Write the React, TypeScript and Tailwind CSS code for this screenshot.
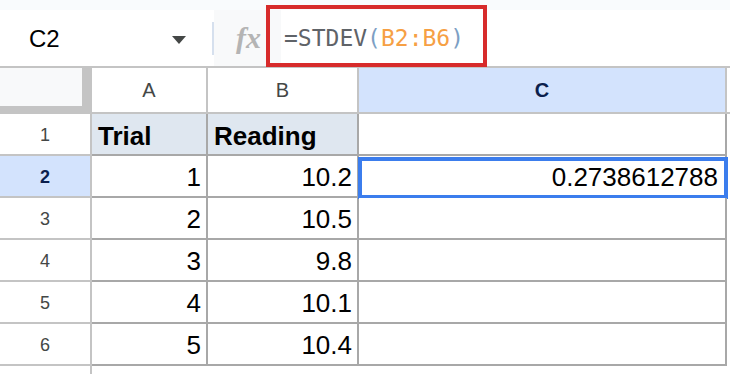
import React from "react";

const rows = [
  { n: 1, a: "Trial", b: "Reading", c: "", head: true },
  { n: 2, a: "1", b: "10.2", c: "0.2738612788" },
  { n: 3, a: "2", b: "10.5", c: "" },
  { n: 4, a: "3", b: "9.8", c: "" },
  { n: 5, a: "4", b: "10.1", c: "" },
  { n: 6, a: "5", b: "10.4", c: "" },
];

export default function App() {
  return (
    <div
      className="relative w-[730px] h-[374px] overflow-hidden bg-white"
      style={{ fontFamily: '"Liberation Sans", Arial, sans-serif' }}
    >
      {/* top strip */}
      <div className="h-[10px] bg-[#f9fbfd]" />
      {/* formula bar */}
      <div className="flex h-[58px] border-b-2 border-[#c4c4c4]">
        <div className="flex w-[212px] items-center justify-between bg-white pl-[29px] pr-[26px] pt-[1px]">
          <span className="text-[24px] leading-none text-black">C2</span>
          <svg width="14" height="8" viewBox="0 0 14 8" className="mt-[2px]">
            <path d="M0 0 L14 0 L7 8 Z" fill="#444746" />
          </svg>
        </div>
        <div className="flex w-[2px] items-center bg-white">
          <div className="h-[33px] w-[2px] bg-[#d6e0ee]" />
        </div>
        <div className="flex w-[67px] items-center bg-[#f8f9fa] pl-[22px]">
          <span
            className="text-[30px] font-bold italic leading-none text-[#b4b4b4]"
            style={{ fontFamily: '"Liberation Serif", "Times New Roman", serif' }}
          >
            fx
          </span>
        </div>
        <div
          className="flex flex-1 items-center bg-white pl-[3px] pt-[1px] text-[23px] leading-none"
          style={{ fontFamily: '"DejaVu Sans Mono", "Liberation Mono", monospace' }}
        >
          <span className="text-[#5f6368]">=STDEV</span>
          <span className="text-[#7d9fc4]">(</span>
          <span className="text-[#f6a044]">B2:B6</span>
          <span className="text-[#7d9fc4]">)</span>
        </div>
      </div>

      {/* column header row */}
      <div className="flex h-[46px]">
        <div className="w-[92px] bg-[#c4c4c4]">
          <div className="h-[38px] w-[82px] bg-[#f8f9fa]" />
        </div>
        <div className="flex w-[116px] items-center justify-center border-r-2 border-b-2 border-[#c4c4c4] bg-white text-[20px] text-[#444746]">
          A
        </div>
        <div className="flex w-[151px] items-center justify-center border-r-2 border-b-2 border-[#c4c4c4] bg-white text-[20px] text-[#444746]">
          B
        </div>
        <div className="flex w-[368px] items-center justify-center border-r-2 border-b-2 border-[#c4c4c4] bg-[#d3e3fd] text-[20px] font-bold text-[#0b1f4d]">
          C
        </div>
        <div className="flex-1 border-b-2 border-[#c4c4c4] bg-white" />
      </div>

      {/* data rows */}
      {rows.map((r) => {
        const sel = r.n === 2;
        return (
          <div key={r.n} className="flex h-[42px]">
            <div
              className={
                sel
                  ? "flex w-[92px] items-center justify-center border-r-2 border-b-2 border-[#c4c4c4] bg-[#d3e3fd] pt-[3px] text-[18px] font-bold text-[#0b1f4d]"
                  : "flex w-[92px] items-center justify-center border-r-2 border-b-2 border-[#c4c4c4] bg-white pt-[3px] text-[18px] text-[#444746]"
              }
            >
              {r.n}
            </div>
            <div
              className={
                r.head
                  ? "flex w-[116px] items-center border-r-2 border-b-2 border-[#a8a8a8] bg-[#dfe7f0] pl-[6px] pt-[4px] text-[26px] font-bold text-black"
                  : "flex w-[116px] items-center justify-end border-r-2 border-b-2 border-[#a8a8a8] bg-white pr-[5px] pt-[3px] text-[26px] text-black"
              }
            >
              {r.a}
            </div>
            <div
              className={
                r.head
                  ? "flex w-[151px] items-center border-r-2 border-b-2 border-[#a8a8a8] bg-[#dfe7f0] pl-[6px] pt-[4px] text-[26px] font-bold text-black"
                  : "flex w-[151px] items-center justify-end border-r-2 border-b-2 border-[#a8a8a8] bg-white pr-[5px] pt-[3px] text-[26px] text-black"
              }
            >
              {r.b}
            </div>
            <div className="relative flex w-[368px] items-center justify-end border-r-2 border-b-2 border-[#a8a8a8] bg-white pr-[7px] pt-[3px] text-[26px] text-black">
              {r.c}
              {sel && (
                <div className="absolute left-[-1px] top-[1px] h-[42px] w-[370px] border-4 border-[#3b7ded]" />
              )}
            </div>
            <div className="flex-1 bg-white" />
          </div>
        );
      })}
      <div className="flex h-[8px]">
        <div className="w-[92px] border-r-2 border-[#c4c4c4] bg-white" />
        <div className="flex-1 bg-white" />
      </div>

      {/* annotation box */}
      <div className="absolute left-[266px] top-[5px] h-[62px] w-[221px] border-4 border-[#d72b2b]" />
    </div>
  );
}
